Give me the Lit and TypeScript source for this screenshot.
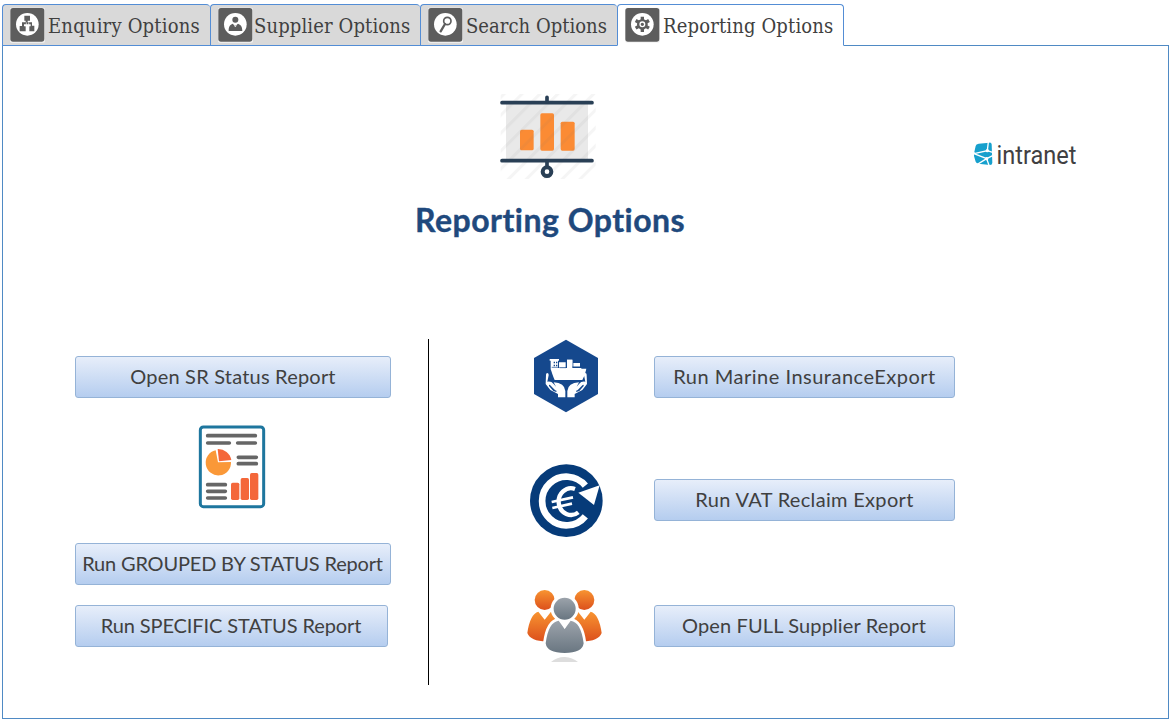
import { LitElement, html, css, svg } from "lit";
import { customElement, property } from "lit/decorators.js";
import { classMap } from "lit/directives/class-map.js";

const tabGlyphs = {
  enquiry: svg`<path d="M73 46h17v15h-7v5h13v10h7v17H88V78h4v-6H72v6h5v15H59V77h7V66h11v-5h-4z" fill="#5d5d5d"/><path d="M79 66v14M86 66v14" stroke="#fff" stroke-width="2"/>`,
  supplier: svg`<circle cx="82" cy="58" r="9" fill="#5d5d5d"/><path d="M62 92c0-14 4-19 12-22l8 6 8-6c8 3 13 8 13 22z" fill="#5d5d5d"/><path d="M77 70l5 10 5-10" fill="none" stroke="#fff" stroke-width="2"/>`,
  search: svg`<circle cx="88" cy="62" r="11" fill="none" stroke="#5d5d5d" stroke-width="5"/><path d="M81 71L68 93" stroke="#5d5d5d" stroke-width="7" stroke-linecap="round"/>`,
  reporting: svg`<circle cx="82" cy="72" r="16" fill="#5d5d5d"/><path d="M82 49v46M62 60.500l40 23M62 83.500l40-23" stroke="#5d5d5d" stroke-width="10"/><circle cx="82" cy="72" r="7" fill="#5d5d5d" stroke="#fff" stroke-width="4"/>`,
};
type Glyph = keyof typeof tabGlyphs;

@customElement("nav-tab")
class NavTab extends LitElement {
  @property() label = "";
  @property() glyph: Glyph = "enquiry";
  static styles = css`
    :host { display: flex; align-items: flex-start; }
    svg { display: block; width: 35px; height: 36px; flex: none; }
    .label {
      font: 20px/24px "DejaVu Serif Condensed", "DejaVu Serif", serif;
      font-stretch: condensed;
      color: #404040; white-space: nowrap; margin: 7px 0 0 var(--label-gap, 3px);
      letter-spacing: var(--track, 0);
    }
  `;
  render() {
    return html`<svg viewBox="30 20 105 108">
        <rect x="30" y="22" width="105" height="105" rx="5" fill="#f4f4f4"/>
        <rect x="31" y="23" width="102" height="101" rx="8" fill="#5d5d5d"/>
        <circle cx="82" cy="72" r="34" fill="#fff"/>${tabGlyphs[this.glyph]}
      </svg><span class="label">${this.label}</span>`;
  }
}

const presentation = html`<svg class="presentation" viewBox="0 0 345 300">
  <defs><pattern id="hatch" width="38" height="38" patternUnits="userSpaceOnUse" patternTransform="rotate(45)">
    <rect width="9" height="38" fill="#777" opacity=".07"/></pattern></defs>
  <rect x="48" y="48" width="246" height="166" fill="#e9e9e9"/>
  <g fill="#fb8b34"><rect x="90" y="125" width="41" height="62" rx="5"/><rect x="151" y="76" width="41" height="112" rx="5"/><rect x="212" y="101" width="42" height="87" rx="5"/></g>
  <rect x="32" y="18" width="285" height="255" fill="url(#hatch)"/>
  <g stroke="#293f55" stroke-linecap="round" fill="none"><path d="M36 44h270M36 218h270" stroke-width="11"/><path d="M171 28v12M171 222v12" stroke-width="11"/><circle cx="171" cy="251" r="13" stroke-width="12" fill="#fff"/></g>
</svg>`;

const logo = html`<svg class="logo" viewBox="0 0 130 50">
  <g transform="scale(.33333)">
    <path d="M56 41L88 38q6-1 7 5l2 55q0 7-7 7L55 101q-6-1-8-6l-5-17q-1-6 3-10l-2-2 4-18q1-6 9-7z" fill="#16a0cd"/>
    <path d="M85 36L82 62 42 71 80 86 52 103M80 86l7 20M82 62l16 5M80 86l18-9" fill="none" stroke="#fff" stroke-width="4"/>
    <circle cx="82" cy="62" r="5" fill="#fff"/><circle cx="80" cy="86" r="5" fill="#fff"/>
  </g>
  <text x="36.500" y="33.500" textLength="80" lengthAdjust="spacingAndGlyphs">intranet</text>
</svg>`;

const statusSheet = html`<svg class="sheet" viewBox="0 0 255 300">
  <rect x="31" y="27" width="190" height="239" rx="9" fill="#fff" stroke="#1e769e" stroke-width="9"/>
  <g stroke="#666" stroke-width="11" stroke-linecap="round"><path d="M53 53h143M53 75h65M143 75h53M145 118h54M145 137h54M53 200h53M53 220h53M53 240h53"/></g>
  <path d="M77 97l7 36 39-1A38 38 0 1 1 77 97z" fill="#fa9838"/><path d="M83 93a40 40 0 0 1 41 33l-37 4z" fill="#f4673a"/>
  <g fill="#f4673a"><rect x="123" y="194" width="25" height="52" rx="5"/><rect x="152" y="180" width="25" height="66" rx="5"/><rect x="180" y="165" width="25" height="81" rx="5"/></g>
</svg>`;

const marine = html`<svg class="badge" viewBox="0 0 246 246">
  <path d="M123 14l96 55v108l-96 55-96-55V69z" fill="#15488d"/>
  <g fill="#fff">
    <path d="M74 72h28v5h-3v22h27V74h16v25h27v2h15q-3 18-12 34H89q-4-8-10-27-3-5-2-11V77h-3z"/>
    <path d="M102 82h20v16h-20zM126 74h16v20h-16zM145 84h20v11h-20z"/>
    <path id="hand" d="M67 114q5 1 4 7l-4 19q12-2 19 7l12 14q3 5-2 6-3 1-7-3l-14-14q-4-2-3 3l13 15 9 3q2-7-1-16l-7-13q33 2 35 26v19H99v-10l-23-12-14-18 1-28q0-5 4-5z"/>
    <use href="#hand" transform="translate(248 0) scale(-1 1)"/>
  </g>
  <path d="M80 97h23M104 98h19M144 96h23" stroke="#15488d" stroke-width="2"/>
  <path d="M86 80h4v5h-4zm7 0h4v5h-4zm-7 9h4v5h-4zm7 0h4v5h-4z" fill="#15488d"/>
</svg>`;

const vat = html`<svg class="badge" viewBox="0 0 246 246">
  <circle cx="124" cy="125" r="109" fill="#063b79"/>
  <path d="M181 172A73 73 0 1 1 181 80" fill="none" stroke="#fff" stroke-width="20"/>
  <path d="M224 79l-17 59-47-37z" fill="#fff"/>
  <path d="M150 90A37 40 0 1 0 160 160" fill="none" stroke="#fff" stroke-width="13"/>
  <path d="M80 129l64-14M82 147l59-13" stroke="#fff" stroke-width="8"/>
</svg>`;

const people = html`<svg class="people" viewBox="0 0 270 255">
  <defs>
    <linearGradient id="warm" x2="0" y2="1"><stop stop-color="#f89431"/><stop offset="1" stop-color="#dc501c"/></linearGradient>
    <linearGradient id="cool" x2="0" y2="1"><stop stop-color="#9ca3ab"/><stop offset="1" stop-color="#697681"/></linearGradient>
  </defs>
  <g fill="url(#warm)"><circle cx="74" cy="51" r="30"/><circle cx="193" cy="51" r="30"/>
    <path d="M55 86q-25 7-33 64 10 25 57 25l45-35V86H93L74 110z"/><path d="M212 86q25 7 33 64-10 25-57 25l-45-35V86h31l19 24z"/></g>
  <circle cx="134" cy="77" r="42" fill="#fff"/>
  <path d="M116 113q-31 4-39 68 4 29 57 29t57-29q-8-64-39-68l-18 25z" fill="url(#cool)" stroke="#fff" stroke-width="16" paint-order="stroke"/>
  <path d="M116 104l18 33 18-33z" fill="#fff"/>
  <circle cx="134" cy="77" r="33" fill="url(#cool)"/>
  <path d="M93 237q20-16 42-15t39 15z" fill="#ddd"/>
</svg>`;

@customElement("app-root")
class AppRoot extends LitElement {
  static styles = css`
    :host { display: block; width: 1173px; height: 722px; background: #fff; overflow: hidden; font-family: Lato, "Liberation Sans", sans-serif; }
    * { box-sizing: border-box; }
    svg { display: block; flex: none; }
    .page { padding: 4px 0 0 2px; }
    .tabs { display: flex; height: 42px; position: relative; }
    .tab { height: 42px; padding: 2px 0 0 7px; border: 1px solid #538dd5; border-right: 0; border-radius: 4px 4px 0 0; background: #d9d9d9; --track: 0.2px; }
    .t1 { width: 208px; }
    .t2 { width: 210px; --label-gap: 1px; --track: 0.13px; }
    .t3 { width: 197px; --track: 0.03px; }
    .t4 { width: 227px; border-right: 1px solid #538dd5; --track: 0.15px; }
    .active { background: #fff; border-bottom-color: #fff; }
    .panel { width: 1167px; height: 674px; margin-top: -1px; border: 1px solid #4f8ac4; display: flex; flex-direction: column; }
    .header { display: flex; height: 289px; padding: 42px 0 0 412px; }
    .title { width: 545px; display: flex; flex-direction: column; }
    .presentation { width: 115px; height: 100px; margin-left: 75px; }
    h1 { margin: 12px 0 0; font-size: 32px; line-height: 40px; font-weight: 700; color: #1f497d; white-space: nowrap; letter-spacing: 0.48px; -webkit-text-stroke: 0.4px #1f497d; }
    .logo { width: 130px; height: 50px; margin-top: 42px; }
    .logo text { font: 400 25px Roboto, sans-serif; fill: #414042; }
    .body { display: flex; }
    .left { width: 353px; height: 350px; margin-left: 72px; display: flex; flex-direction: column; align-items: flex-start; padding-top: 21px; }
    .sheet { width: 85px; height: 100px; margin: 20px 0 25px 115px; }
    .divider { width: 1px; height: 346px; margin-top: 4px; background: #000; }
    .right { margin-left: 91px; display: flex; flex-direction: column; gap: 42px; }
    .row { display: flex; align-items: flex-start; height: 82px; }
    .cell { width: 134px; flex: none; }
    .badge { width: 82px; height: 82px; margin-left: 5px; }
    .people { width: 90px; height: 85px; }
    button { display: flex; align-items: center; justify-content: center; width: 301px; height: 42px; padding: 0 0 2px; border: 1px solid #95b3d7; border-radius: 3px; background: linear-gradient(#e7eefa, #b5cdef); color: #404040; font: 20px/24px Lato, sans-serif; white-space: nowrap; letter-spacing: 0.2px; }
    .left button { width: 316px; }
    .left .grouped { letter-spacing: -0.18px; padding-right: 1px; }
    .left .narrow { width: 313px; margin-top: 20px; letter-spacing: -0.1px; padding-right: 1px; }
    .row button { margin-top: 21px; letter-spacing: 0.5px; }
    .row:nth-child(2) button { margin-top: 20px; letter-spacing: 0.32px; }
    .row:nth-child(3) button { margin-top: 22px; letter-spacing: 0.13px; padding-right: 1px; }
  `;
  private tabs: { label: string; glyph: Glyph }[] = [
    { label: "Enquiry Options", glyph: "enquiry" },
    { label: "Supplier Options", glyph: "supplier" },
    { label: "Search Options", glyph: "search" },
    { label: "Reporting Options", glyph: "reporting" },
  ];
  private exports = [
    { icon: marine, label: "Run Marine InsuranceExport" },
    { icon: vat, label: "Run VAT Reclaim Export" },
    { icon: people, label: "Open FULL Supplier Report" },
  ];
  render() {
    return html`<div class="page">
      <nav class="tabs">${this.tabs.map((t, i) => html`<nav-tab class=${classMap({ tab: true, [`t${i + 1}`]: true, active: i === 3 })} .label=${t.label} .glyph=${t.glyph}></nav-tab>`)}</nav>
      <main class="panel">
        <header class="header"><div class="title">${presentation}<h1>Reporting Options</h1></div>${logo}</header>
        <div class="body">
          <section class="left">
            <button>Open SR Status Report</button>${statusSheet}
            <button class="grouped">Run GROUPED BY STATUS Report</button>
            <button class="narrow">Run SPECIFIC STATUS Report</button>
          </section>
          <div class="divider"></div>
          <section class="right">${this.exports.map((e) => html`<div class="row"><div class="cell">${e.icon}</div><button>${e.label}</button></div>`)}</section>
        </div>
      </main>
    </div>`;
  }
}
